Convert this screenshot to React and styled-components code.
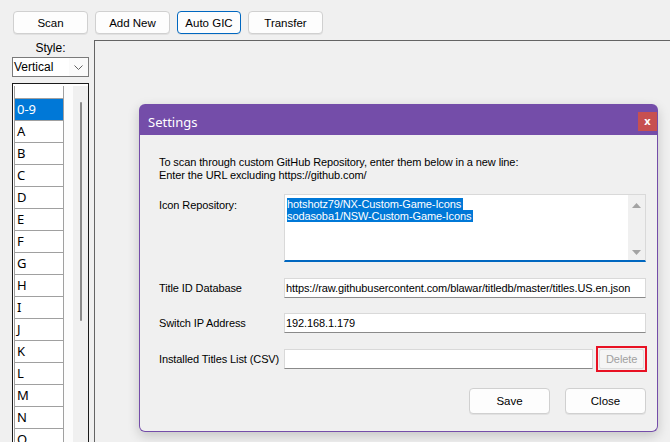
import React from "react";
import styled, { createGlobalStyle } from "styled-components";

const GlobalStyle = createGlobalStyle`
  html, body {
    margin: 0;
    padding: 0;
    background: #f0f0f0;
  }
  body {
    font-family: "Liberation Sans", Arial, sans-serif;
    font-size: 12px;
    color: #000;
    overflow: hidden;
  }
`;

const Screen = styled.div`
  position: relative;
  width: 670px;
  height: 442px;
  overflow: hidden;
  background: #f0f0f0;
`;

const Toolbar = styled.div`
  display: flex;
  gap: 7px;
  padding: 11px 0 0 13px;
`;

const Button = styled.button`
  box-sizing: border-box;
  width: ${p => p.$w || 75}px;
  height: ${p => p.$h || 23}px;
  padding: 0;
  border: 1px solid ${p => (p.$focus ? "#0067c0" : "#d0d0d0")};
  border-radius: 4px;
  background: #fdfdfd;
  font-family: inherit;
  font-size: 11.5px;
  color: #000;
  box-shadow: 0 1px 0 rgba(0, 0, 0, 0.06);
`;

const Body = styled.div`
  display: flex;
  gap: 5px;
  margin-top: 6px;
  padding-left: 12px;
  height: 402px;
`;

const Sidebar = styled.div`
  display: flex;
  flex-direction: column;
  width: 77px;
`;

const StyleLabel = styled.div`
  height: 16px;
  text-align: center;
  line-height: 14px;
  padding-top: 1px;
`;

const Select = styled.div`
  box-sizing: border-box;
  display: flex;
  align-items: center;
  justify-content: space-between;
  height: 20px;
  border: 1px solid #7a7a7a;
  background: #fff;
  padding-left: 1px;
`;

const SelectArrow = styled.div`
  display: flex;
  align-items: center;
  justify-content: center;
  width: 19px;
  height: 18px;
  background: #fafafa;
`;

const List = styled.div`
  box-sizing: border-box;
  display: flex;
  margin-top: 6px;
  flex: 1;
  border: 1px solid #1a1a1a;
  border-bottom: none;
  padding: 2px 0 0 1px;
  background: #fff;
  overflow: hidden;
`;

const Rows = styled.div`
  width: 50px;
  display: flex;
  flex-direction: column;
`;

const Row = styled.div`
  box-sizing: border-box;
  flex: none;
  height: ${p => p.$h || 22}px;
  border: 1px solid #a0a0a0;
  border-top: none;
  background: ${p => (p.$active ? "#0078d7" : "#fff")};
  color: ${p => (p.$active ? "#fff" : "#000")};
  font-family: "Noto Sans", sans-serif;
  font-size: 13px;
  line-height: 21px;
  padding-left: 2px;
`;

const Gutter = styled.div`
  width: 9px;
  background: #fcfcfc;
`;

const Track = styled.div`
  flex: 1;
  background: #f0f0f0;
  display: flex;
  justify-content: center;
  padding-top: 16px;
`;

const Thumb = styled.div`
  width: 2px;
  height: 219px;
  background: #8a8a8a;
  border-radius: 1px;
`;

const Panel = styled.div`
  flex: 1;
  border-top: 1px solid #646464;
  border-left: 1px solid #646464;
`;

const Dialog = styled.div`
  position: absolute;
  left: 139px;
  top: 104px;
  width: 519px;
  height: 328px;
  box-sizing: border-box;
  display: flex;
  flex-direction: column;
  border-radius: 6px;
  background: #f0f0f0;
  box-shadow: 0 4px 12px rgba(0, 0, 0, 0.18);
  font-size: 11px;
  letter-spacing: -0.1px;
`;

const TitleBar = styled.div`
  display: flex;
  align-items: center;
  justify-content: space-between;
  height: 31px;
  box-sizing: border-box;
  padding: 4px 1px 0 9px;
  background: #744da9;
  border-radius: 6px 6px 0 0;
  color: #fff;
  font-family: "Noto Sans", sans-serif;
  font-size: 13px;
  letter-spacing: 0;
`;

const CloseX = styled.div`
  width: 19px;
  height: 19px;
  background: #c75050;
  color: #fff;
  font-weight: bold;
  font-size: 11px;
  line-height: 18px;
  text-align: center;
`;

const Content = styled.div`
  flex: 1;
  border: 1px solid #744da9;
  border-top: none;
  border-radius: 0 0 6px 6px;
  padding: 21px 10px 0 19px;
`;

const Intro = styled.div`
  line-height: 13px;
`;

const Field = styled.div`
  display: flex;
  align-items: ${p => (p.$top ? "flex-start" : "center")};
  margin-top: ${p => p.$mt}px;
`;

const Label = styled.div`
  width: 125px;
  flex: none;
  white-space: nowrap;
  padding-top: ${p => (p.$top ? 5 : 0)}px;
`;

const Input = styled.div`
  box-sizing: border-box;
  width: ${p => p.$w || 362}px;
  height: 20px;
  background: #fff;
  border: 1px solid #d9d9d9;
  border-bottom-color: #8a8a8a;
  padding-left: 1px;
  line-height: 18px;
  white-space: nowrap;
  overflow: hidden;
`;

const TextArea = styled.div`
  box-sizing: border-box;
  display: flex;
  width: 362px;
  height: 68px;
  background: #fff;
  border: 1px solid #d9d9d9;
  border-bottom: 2px solid #0067c0;
`;

const Lines = styled.div`
  flex: 1;
  padding: 3px 0 0 2px;
  line-height: 12px;
`;

const Sel = styled.span`
  display: inline-block;
  background: #0078d7;
  color: #fff;
  padding-right: 2px;
`;

const VScroll = styled.div`
  width: 17px;
  background: #f0f0f0;
  display: flex;
  flex-direction: column;
  align-items: center;
  justify-content: space-between;
  padding: 8px 0 5px;
`;

const RedFrame = styled.div`
  margin-left: 3px;
  width: 51px;
  height: 26px;
  box-sizing: border-box;
  border: 2px solid #e81123;
  padding: 1px;
`;

const DisabledButton = styled.div`
  box-sizing: border-box;
  height: 20px;
  border: 1px solid #dcdcdc;
  border-radius: 2px;
  background: #f5f5f5;
  color: #a0a0a0;
  text-align: center;
  line-height: 18px;
`;

const Actions = styled.div`
  display: flex;
  justify-content: flex-end;
  gap: 15px;
  margin-top: 16px;
  padding-right: 1px;
`;

const Chevron = () => (
  <svg width="9" height="5" viewBox="0 0 9 5">
    <path d="M0.5 0.5 L4.5 4.5 L8.5 0.5" fill="none" stroke="#606060" strokeWidth="1" />
  </svg>
);

const Arrow = ({ up }) => (
  <svg width="9" height="5" viewBox="0 0 9 5">
    <path d={up ? "M0 5 L4.5 0 L9 5 Z" : "M0 0 L4.5 5 L9 0 Z"} fill="#a3a3a3" />
  </svg>
);

const letters = ["A", "B", "C", "D", "E", "F", "G", "H", "I", "J", "K", "L", "M", "N", "O"];

export default function App() {
  return (
    <Screen>
      <GlobalStyle />
      <Toolbar>
        <Button $w={75}>Scan</Button>
        <Button $w={75}>Add New</Button>
        <Button $w={64} $focus>Auto GIC</Button>
        <Button $w={75}>Transfer</Button>
      </Toolbar>
      <Body>
        <Sidebar>
          <StyleLabel>Style:</StyleLabel>
          <Select>
            <span>Vertical</span>
            <SelectArrow>
              <Chevron />
            </SelectArrow>
          </Select>
          <List>
            <Rows>
              <Row $h={13} />
              <Row $active>0-9</Row>
              {letters.map(l => (
                <Row key={l}>{l}</Row>
              ))}
            </Rows>
            <Gutter />
            <Track>
              <Thumb />
            </Track>
          </List>
        </Sidebar>
        <Panel />
      </Body>

      <Dialog>
        <TitleBar>
          <span>Settings</span>
          <CloseX>x</CloseX>
        </TitleBar>
        <Content>
          <Intro>
            To scan through custom GitHub Repository, enter them below in a new line:
            <br />
            Enter the URL excluding https://github.com/
          </Intro>
          <Field $top $mt={12}>
            <Label $top>Icon Repository:</Label>
            <TextArea>
              <Lines>
                <Sel>hotshotz79/NX-Custom-Game-Icons</Sel>
                <br />
                <Sel>sodasoba1/NSW-Custom-Game-Icons</Sel>
              </Lines>
              <VScroll>
                <Arrow up />
                <Arrow />
              </VScroll>
            </TextArea>
          </Field>
          <Field $mt={16}>
            <Label>Title ID Database</Label>
            <Input>https://raw.githubusercontent.com/blawar/titledb/master/titles.US.en.json</Input>
          </Field>
          <Field $mt={15}>
            <Label>Switch IP Address</Label>
            <Input>192.168.1.179</Input>
          </Field>
          <Field $mt={13}>
            <Label>Installed Titles List (CSV)</Label>
            <Input $w={311} />
            <RedFrame>
              <DisabledButton>Delete</DisabledButton>
            </RedFrame>
          </Field>
          <Actions>
            <Button $w={81} $h={26}>Save</Button>
            <Button $w={81} $h={26}>Close</Button>
          </Actions>
        </Content>
      </Dialog>
    </Screen>
  );
}
